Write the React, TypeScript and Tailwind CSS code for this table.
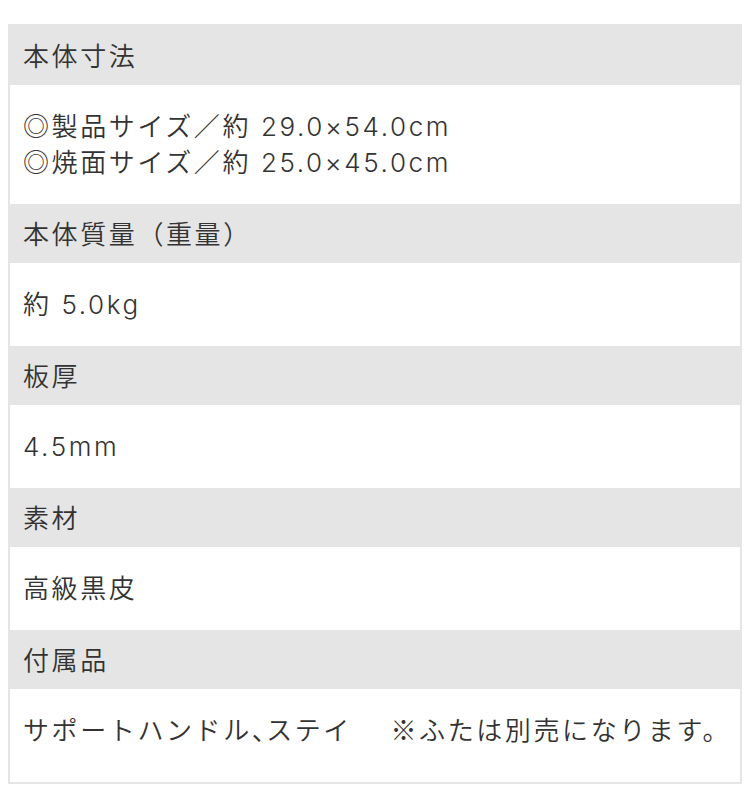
const cjk = "font-['Noto_Sans_CJK_JP']";

const specs: { label: string; lines: React.ReactNode[] }[] = [
  { label: "本体寸法", lines: ["◎製品サイズ／約 29.0×54.0cm", "◎焼面サイズ／約 25.0×45.0cm"] },
  { label: "本体質量（重量）", lines: ["約 5.0kg"] },
  { label: "板厚", lines: ["4.5mm"] },
  { label: "素材", lines: ["高級黒皮"] },
  {
    label: "付属品",
    lines: [
      <>
        サポートハンドル<span className="tracking-[-0.45em]">、</span>ステイ　 <span className={cjk}>※</span>ふたは別売になります。
      </>,
    ],
  },
];

export default function App() {
  return (
    <div className="min-h-[805px] w-[750px] bg-white pt-6">
      <dl
        className="mx-2 border-2 border-[#e5e5e5] text-[26px] leading-[36px] font-[350] tracking-[0.1em] text-[#333]"
        style={{ fontFamily: 'Inter, "Noto Sans CJK JP", sans-serif' }}
      >
        {specs.map((s, i) => (
          <div key={s.label}>
            <dt className="bg-[#e5e5e5] px-[13px] pt-[13px] pb-[10px]">{s.label}</dt>
            <dd
              className={
                i === specs.length - 1
                  ? "px-[13px] pt-[22px] pb-[33px] whitespace-nowrap"
                  : "px-[13px] pt-6 pb-[23px]"
              }
            >
              {s.lines.map((l, j) => (
                <div key={j}>{l}</div>
              ))}
            </dd>
          </div>
        ))}
      </dl>
    </div>
  );
}
